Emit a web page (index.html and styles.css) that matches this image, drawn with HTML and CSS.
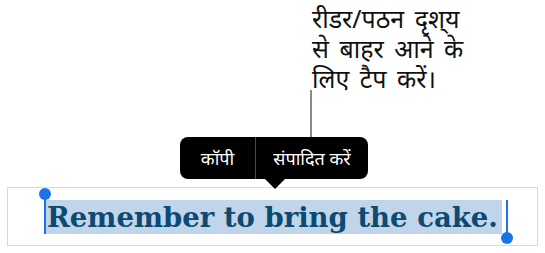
FILE: index.html
```html
<!DOCTYPE html>
<html lang="hi">
  <head>
    <meta charset="UTF-8" />
    <title>पठन दृश्य</title>
    <link rel="stylesheet" href="styles.css">
  </head>
  <body>
    <div class="callout">
      <p class="callout-text">रीडर/पठन दृश्‌य<br />से बाहर आने के<br />लिए टैप करें।</p>
      <div class="leader"></div>
    </div>

    <div class="menu">
      <span class="menu-item">कॉपी</span>
      <span class="menu-item">संपादित करें</span>
    </div>

    <div class="field">
      <span class="selection">Remember to bring the cake.<span class="handle handle-start"></span><span class="handle handle-end"></span></span>
    </div>
  </body>
</html>
```

FILE: styles.css
```css
body {
  margin: 0;
  background: white;
  width: 545px;
  height: 253px;
  overflow: hidden;
}
.callout {
  margin-left: 310px;
}
.callout-text {
  margin: 0 0 0 2px;
  padding-top: 3px;
  height: 87px;
  font-family: "Noto Sans", sans-serif;
  font-size: 25px;
  line-height: 30px;
  word-spacing: 4px;
  color: #111;
}
.leader {
  width: 2px;
  height: 47px;
  background: #8a8a8a;
}
.menu {
  position: relative;
  display: flex;
  width: 188px;
  height: 42px;
  margin-left: 180px;
  background: black;
  border-radius: 8px;
  font-family: "Noto Sans", sans-serif;
  font-size: 18px;
  color: white;
}
.menu::after {
  content: "";
  position: absolute;
  left: 85px;
  top: 42px;
  border-left: 10px solid transparent;
  border-right: 10px solid transparent;
  border-top: 10px solid black;
}
.menu-item {
  display: flex;
  align-items: center;
  justify-content: center;
}
.menu-item:first-child {
  width: 75px;
  border-right: 1px solid #4a4a4a;
}
.menu-item:last-child {
  flex: 1;
}
.field {
  margin: 8px 0 0 7px;
  width: 529px;
  height: 57px;
  border: 1px solid #d9d9d9;
  display: flex;
  align-items: center;
}
.selection {
  position: relative;
  margin-left: 36px;
  padding: 0 4px 0 3px;
  background: #c1d5ea;
  font-family: "DejaVu Serif", serif;
  font-weight: bold;
  font-size: 27.5px;
  line-height: 34px;
  color: #0c4a72;
}
.handle {
  position: absolute;
  width: 2px;
  background: #1a73e8;
}
.handle::after {
  content: "";
  position: absolute;
  left: -5px;
  width: 12px;
  height: 12px;
  border-radius: 50%;
  background: #1a73e8;
}
.handle-start {
  left: 0;
  top: -6px;
  height: 40px;
}
.handle-start::after {
  top: -6px;
}
.handle-end {
  right: -6px;
  top: 0;
  height: 38px;
}
.handle-end::after {
  bottom: -6px;
}
```
